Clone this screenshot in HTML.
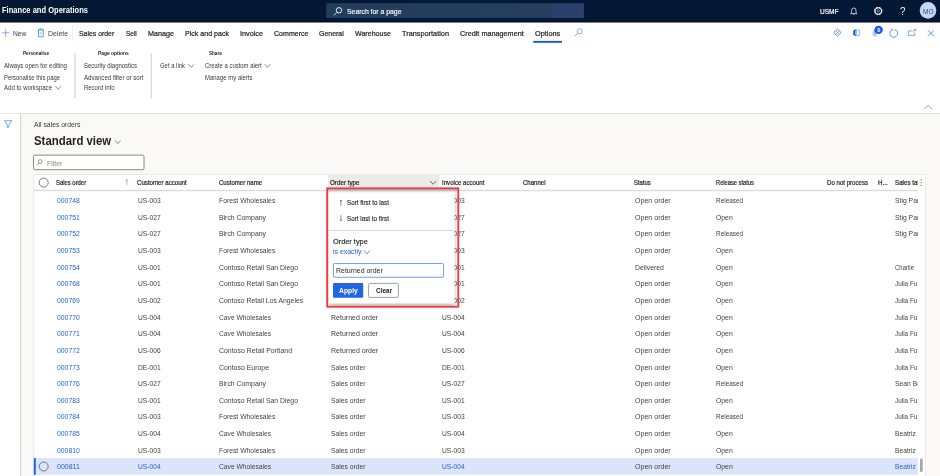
<!DOCTYPE html>
<html><head><meta charset="utf-8"><title>All sales orders</title>
<style>
html,body{margin:0;padding:0;}
body{width:940px;height:476px;overflow:hidden;position:relative;background:#faf9f8;font-family:"Liberation Sans",sans-serif;}
.t{position:absolute;white-space:nowrap;line-height:12px;height:12px;display:block;transform-origin:0 50%;}
.L{position:absolute;left:0;top:0;display:block;}
</style></head><body>
<svg class="L" width="940" height="476" viewBox="0 0 940 476"><defs><linearGradient id="sg" x1="0" x2="1" y1="0" y2="0"><stop offset="0" stop-color="#233e5d"/><stop offset="0.874" stop-color="#243f5e"/><stop offset="0.878" stop-color="#2a3f6a"/><stop offset="1" stop-color="#2a3f6b"/></linearGradient><filter id="sh" x="-15%" y="-15%" width="130%" height="135%"><feGaussianBlur stdDeviation="2.1"/></filter><linearGradient id="tg" x1="0" x2="0" y1="0" y2="1"><stop offset="0" stop-color="#8c9898" stop-opacity="0.75"/><stop offset="1" stop-color="#8c9898" stop-opacity="0"/></linearGradient></defs><rect x="0.00" y="0.00" width="940.00" height="22.60" fill="#041734" />
<rect x="0.00" y="21.60" width="940.00" height="1.00" fill="#01061f" />
<rect x="326.20" y="3.20" width="257.70" height="14.70" fill="url(#sg)" rx="0.8" />
<g transform="translate(333 6.3)"><circle cx="6" cy="4" r="2.7" fill="none" stroke="#fff" stroke-width="0.9"/><path d="M4 6 L1 9" fill="none" stroke="#fff" stroke-width="0.9" /></g>
<g transform="translate(850.3 6.9)"><path d="M1.3 6 V3.3 A2.2 2.2 0 0 1 5.7 3.3 V6 L6.7 6.7 H0.3 L1.3 6 M2.9 7.7 H4.1" fill="none" stroke="#fff" stroke-width="0.7" stroke-linejoin="round"/></g>
<g transform="translate(874 6.8)"><circle cx="4.25" cy="4.2" r="3.5" fill="none" stroke="#fff" stroke-width="1.25" stroke-dasharray="2.1 0.65"/><circle cx="4.25" cy="4.2" r="3.3" fill="none" stroke="#fff" stroke-width="0.7"/><circle cx="4.25" cy="4.2" r="1.2" fill="none" stroke="#fff" stroke-width="0.55" opacity="0.85"/></g>
<circle cx="928" cy="10.4" r="8.3" fill="#c6d5f5"/>
<rect x="0.00" y="22.60" width="940.00" height="91.00" fill="#ffffff" />
<g transform="translate(1.6 28.7)"><path d="M4.1 0 V8.3 M0.2 4.15 H8 " fill="none" stroke="#5d8fe6" stroke-width="0.7" /></g>
<g transform="translate(37.4 28.4)"><path d="M0.3 1.6 H6.7 M2.3 1.6 V0.5 H4.7 V1.6 M1.1 1.6 V8.4 H5.9 V1.6" fill="none" stroke="#3f7be2" stroke-width="0.75" /><path d="M2.8 3.4 V6.8 M4.2 3.4 V6.8" fill="none" stroke="#8fb0ee" stroke-width="0.6" /></g>
<rect x="72.50" y="25.00" width="0.60" height="16.00" fill="#e1dfdd" />
<rect x="533.20" y="40.90" width="28.80" height="1.90" fill="#1459e4" />
<g transform="translate(574.2 27.9)"><circle cx="5.5" cy="3.4" r="2.5" fill="none" stroke="#5a8dea" stroke-width="0.7"/><path d="M3.7 5.2 L0.8 8.1" fill="none" stroke="#5a8dea" stroke-width="0.7" /></g>
<g transform="translate(833.2 28.6)"><path d="M4.25 0.5 L8 4 L4.25 7.6 L0.5 4 Z" fill="none" stroke="#3f7be6" stroke-width="0.8" stroke-linejoin="round"/><path d="M2.6 2.4 L5.9 5.6 M5.9 2.4 L2.6 5.6" fill="none" stroke="#5a8dea" stroke-width="0.7" /></g>
<g transform="translate(853 29)"><path d="M0.2 1.5 L3.4 0.1 V7.3 L0.2 5.9 Z" fill="#1f5fe0"/><rect x="2.1" y="1.7" width="0.6" height="4" fill="#dfe9fb"/><path d="M3.6 0.9 H6.4 V6.5 H3.6" fill="none" stroke="#6f9aec" stroke-width="0.7" /></g>
<g transform="translate(872.6 29.6)"><path d="M1 0.3 H3.4 V5 A1.2 1.2 0 0 1 1 5 Z" fill="#9db8ee"/><path d="M4.2 1.6 V5.3 A2 2 0 0 1 0.3 5.3 V2" fill="none" stroke="#9db8ee" stroke-width="0.6" /></g>
<circle cx="878.6" cy="29.9" r="4.2" fill="#1a58de"/>
<g transform="translate(889 28.3)"><path d="M2.9 1.6 A3.9 3.9 0 1 0 5.9 1.3" fill="none" stroke="#3f7be6" stroke-width="0.8" /><path d="M3.3 0.1 L2.9 1.8 L4.6 2.2" fill="none" stroke="#3f7be6" stroke-width="0.7" /></g>
<g transform="translate(907.9 29)"><path d="M4.6 1.9 H0.4 V6.4 H6.9 V3.6" fill="none" stroke="#5a8dea" stroke-width="0.8" /><path d="M5 2.6 L7.9 0.4 M6.2 0.3 H8 V2" fill="none" stroke="#4f86ea" stroke-width="0.7" /></g>
<g transform="translate(927.7 30.1)"><path d="M0.2 0.2 L6.2 6.2 M6.2 0.2 L0.2 6.2" fill="none" stroke="#3f7be6" stroke-width="0.8" /></g>
<g transform="translate(55.4 86.2)"><path d="M0 0 L2.8 3.2 L5.6 0" fill="none" stroke="#605e5c" stroke-width="0.7" /></g>
<g transform="translate(188.4 64.2)"><path d="M0 0 L2.8 3.2 L5.6 0" fill="none" stroke="#605e5c" stroke-width="0.7" /></g>
<g transform="translate(264.7 64.2)"><path d="M0 0 L2.8 3.2 L5.6 0" fill="none" stroke="#605e5c" stroke-width="0.7" /></g>
<rect x="74.40" y="53.00" width="1.10" height="45.00" fill="#d6d4d2" />
<rect x="150.80" y="53.00" width="1.10" height="45.00" fill="#d6d4d2" />
<g transform="translate(924.5 105.5)"><path d="M0 3.4 L3.7 0 L7.4 3.4" fill="none" stroke="#8a8886" stroke-width="0.8" /></g>
<rect x="0.00" y="113.10" width="940.00" height="0.90" fill="#d8d6d4" />
<rect x="0.00" y="113.80" width="940.00" height="363.00" fill="#faf9f8" />
<rect x="0.00" y="113.80" width="20.20" height="363.00" fill="#ffffff" />
<rect x="20.20" y="113.80" width="0.90" height="363.00" fill="#cfcdcb" />
<g transform="translate(3.9 120.2)"><path d="M0.4 0.5 H8 L5 4.2 V6.9 L3.4 7.4 V4.2 Z" fill="none" stroke="#4f86ea" stroke-width="0.75" stroke-linejoin="round"/></g>
<g transform="translate(115.1 140.4)"><path d="M0 0 L2.75 3.2 L5.5 0" fill="none" stroke="#605e5c" stroke-width="0.7" /></g>
<rect x="33.50" y="155.10" width="110.50" height="14.60" fill="#ffffff" stroke="#6b6967" stroke-width="0.8" rx="1.5" />
<g transform="translate(36.3 159.3)"><circle cx="3.9" cy="2.3" r="1.95" fill="none" stroke="#605e5c" stroke-width="0.65"/><path d="M2.5 3.7 L0.3 5.9" fill="none" stroke="#605e5c" stroke-width="0.65" /></g>
<rect x="33.80" y="174.60" width="891.60" height="303.00" fill="#ffffff" stroke="#e6e4e2" stroke-width="0.8" />
<rect x="328.00" y="174.60" width="111.40" height="12.40" fill="#edebe9" />
<rect x="33.80" y="189.80" width="884.00" height="1.40" fill="#dedcda" />
<circle cx="43.7" cy="182.6" r="4.5" fill="none" stroke="#605e5c" stroke-width="0.8"/>
<g transform="translate(125.4 179.3)"><path d="M1.5 0.3 V5.6 M0.3 1.5 L1.5 0.3 L2.7 1.5" fill="none" stroke="#7a7876" stroke-width="0.55" /></g>
<g transform="translate(430 181)"><path d="M0 0 L3.15 3.3 L6.3 0" fill="none" stroke="#484644" stroke-width="0.8" /></g>
<rect x="920.60" y="179.30" width="1.10" height="1.10" fill="#605e5c" />
<rect x="920.60" y="182.10" width="1.10" height="1.10" fill="#605e5c" />
<rect x="920.60" y="184.90" width="1.10" height="1.10" fill="#605e5c" />
<rect x="33.80" y="458.10" width="884.10" height="16.70" fill="#dae5fb" />
<rect x="33.80" y="458.10" width="2.00" height="16.70" fill="#2266e3" />
<circle cx="43.7" cy="466.5" r="4.5" fill="none" stroke="#605e5c" stroke-width="0.8"/>
<rect x="920.00" y="458.50" width="2.70" height="13.50" fill="#a6a6a6" rx="1.3" /></svg>
<span class="t" style="left:2px;top:5px;font-size:8.2px;color:#ffffff;font-weight:700;transform:scaleX(0.9221);">Finance and Operations</span>
<span class="t" style="left:346.5px;top:6px;font-size:7.6px;color:#ffffff;-webkit-text-stroke:0.15px #ffffff;transform:scaleX(0.9027);">Search for a page</span>
<span class="t" style="left:819.5px;top:6px;font-size:7.2px;color:#ffffff;-webkit-text-stroke:0.2px #ffffff;transform:scaleX(0.9080);">USMF</span>
<span class="t" style="left:900px;top:5px;font-size:11.5px;color:#ffffff;transform:scaleX(0.8500);">?</span>
<span class="t" style="left:922.6px;top:6px;font-size:7px;color:#3d4d6e;transform:scaleX(0.9396);">MO</span>
<span class="t" style="left:12.5px;top:28px;font-size:7.7px;color:#403f3e;transform:scaleX(0.8772);">New</span>
<span class="t" style="left:47.5px;top:28px;font-size:7.7px;color:#403f3e;transform:scaleX(0.8995);">Delete</span>
<span class="t" style="left:78.75px;top:28px;font-size:7.7px;color:#252423;-webkit-text-stroke:0.22px #252423;transform:scaleX(0.8967);">Sales order</span>
<span class="t" style="left:125.5px;top:28px;font-size:7.7px;color:#252423;-webkit-text-stroke:0.22px #252423;transform:scaleX(0.8380);">Sell</span>
<span class="t" style="left:147.5px;top:28px;font-size:7.7px;color:#252423;-webkit-text-stroke:0.22px #252423;transform:scaleX(0.9359);">Manage</span>
<span class="t" style="left:184.5px;top:28px;font-size:7.7px;color:#252423;-webkit-text-stroke:0.22px #252423;transform:scaleX(0.9194);">Pick and pack</span>
<span class="t" style="left:239.5px;top:28px;font-size:7.7px;color:#252423;-webkit-text-stroke:0.22px #252423;transform:scaleX(0.9442);">Invoice</span>
<span class="t" style="left:273.5px;top:28px;font-size:7.7px;color:#252423;-webkit-text-stroke:0.22px #252423;transform:scaleX(0.9177);">Commerce</span>
<span class="t" style="left:319.25px;top:28px;font-size:7.7px;color:#252423;-webkit-text-stroke:0.22px #252423;transform:scaleX(0.9046);">General</span>
<span class="t" style="left:355px;top:28px;font-size:7.7px;color:#252423;-webkit-text-stroke:0.22px #252423;transform:scaleX(0.9223);">Warehouse</span>
<span class="t" style="left:402px;top:28px;font-size:7.7px;color:#252423;-webkit-text-stroke:0.22px #252423;transform:scaleX(0.9534);">Transportation</span>
<span class="t" style="left:460px;top:28px;font-size:7.7px;color:#252423;-webkit-text-stroke:0.22px #252423;transform:scaleX(0.9442);">Credit management</span>
<span class="t" style="left:535px;top:28px;font-size:7.7px;color:#252423;-webkit-text-stroke:0.22px #252423;transform:scaleX(0.9528);">Options</span>
<span class="t" style="left:877.2px;top:24px;font-size:5px;color:#ffffff;font-weight:700;transform:scaleX(1.0000);">0</span>
<span class="t" style="left:23px;top:47px;font-size:5.5px;color:#252423;font-weight:700;transform:scaleX(0.8417);">Personalise</span>
<span class="t" style="left:98.25px;top:47px;font-size:5.5px;color:#252423;font-weight:700;transform:scaleX(0.8905);">Page options</span>
<span class="t" style="left:208.75px;top:47px;font-size:5.5px;color:#252423;font-weight:700;transform:scaleX(0.8335);">Share</span>
<span class="t" style="left:4px;top:60px;font-size:6.5px;color:#3b3a39;transform:scaleX(0.9372);">Always open for editing</span>
<span class="t" style="left:4px;top:72px;font-size:6.5px;color:#3b3a39;transform:scaleX(0.9010);">Personalise this page</span>
<span class="t" style="left:4px;top:82px;font-size:6.5px;color:#3b3a39;transform:scaleX(0.9289);">Add to workspace</span>
<span class="t" style="left:84px;top:60px;font-size:6.5px;color:#3b3a39;transform:scaleX(0.9168);">Security diagnostics</span>
<span class="t" style="left:84px;top:72px;font-size:6.5px;color:#3b3a39;transform:scaleX(0.9409);">Advanced filter or sort</span>
<span class="t" style="left:84px;top:82px;font-size:6.5px;color:#3b3a39;transform:scaleX(0.9173);">Record info</span>
<span class="t" style="left:160px;top:60px;font-size:6.5px;color:#3b3a39;transform:scaleX(0.9101);">Get a link</span>
<span class="t" style="left:205px;top:60px;font-size:6.5px;color:#3b3a39;transform:scaleX(0.9133);">Create a custom alert</span>
<span class="t" style="left:205px;top:72px;font-size:6.5px;color:#3b3a39;transform:scaleX(0.9193);">Manage my alerts</span>
<span class="t" style="left:34.1px;top:119px;font-size:6.6px;color:#3b3a39;transform:scaleX(1.0315);">All sales orders</span>
<span class="t" style="left:34.4px;top:135px;font-size:12px;color:#201f1e;font-weight:700;transform:scaleX(0.9489);">Standard view</span>
<span class="t" style="left:46.6px;top:158px;font-size:7px;color:#8a8886;transform:scaleX(0.9896);">Filter</span>
<span class="t" style="left:56px;top:177px;font-size:6.5px;color:#252423;-webkit-text-stroke:0.2px #252423;transform:scaleX(0.9053);">Sales order</span>
<span class="t" style="left:137.4px;top:177px;font-size:6.5px;color:#252423;-webkit-text-stroke:0.2px #252423;transform:scaleX(0.9422);">Customer account</span>
<span class="t" style="left:218.9px;top:177px;font-size:6.5px;color:#252423;-webkit-text-stroke:0.2px #252423;transform:scaleX(0.9319);">Customer name</span>
<span class="t" style="left:330px;top:177px;font-size:6.5px;color:#252423;-webkit-text-stroke:0.2px #252423;transform:scaleX(0.9603);">Order type</span>
<span class="t" style="left:441.8px;top:177px;font-size:6.5px;color:#252423;-webkit-text-stroke:0.2px #252423;transform:scaleX(0.9386);">Invoice account</span>
<span class="t" style="left:522.5px;top:177px;font-size:6.5px;color:#252423;-webkit-text-stroke:0.2px #252423;transform:scaleX(0.9290);">Channel</span>
<span class="t" style="left:634.2px;top:177px;font-size:6.5px;color:#252423;-webkit-text-stroke:0.2px #252423;transform:scaleX(0.9058);">Status</span>
<span class="t" style="left:715.9px;top:177px;font-size:6.5px;color:#252423;-webkit-text-stroke:0.2px #252423;transform:scaleX(0.8791);">Release status</span>
<span class="t" style="left:827px;top:177px;font-size:6.5px;color:#252423;-webkit-text-stroke:0.2px #252423;transform:scaleX(0.9378);">Do not process</span>
<span class="t" style="left:877.5px;top:177px;font-size:6.5px;color:#252423;-webkit-text-stroke:0.2px #252423;transform:scaleX(0.9580);">H...</span>
<span class="t" style="left:894.5px;top:177px;font-size:6.5px;color:#252423;-webkit-text-stroke:0.2px #252423;transform:scaleX(0.9584);width:23.58px;overflow:hidden;">Sales tal</span>
<span class="t" style="left:56.6px;top:195px;font-size:7.7px;color:#2463dc;transform:scaleX(0.8887);">000748</span>
<span class="t" style="left:137.9px;top:195px;font-size:7.7px;color:#403f3e;transform:scaleX(0.8666);">US-003</span>
<span class="t" style="left:219px;top:195px;font-size:7.7px;color:#403f3e;transform:scaleX(0.8842);">Forest Wholesales</span>
<span class="t" style="left:442.2px;top:195px;font-size:7.7px;color:#403f3e;transform:scaleX(0.8666);">US-003</span>
<span class="t" style="left:635px;top:195px;font-size:7.7px;color:#403f3e;transform:scaleX(0.9180);">Open order</span>
<span class="t" style="left:716px;top:195px;font-size:7.7px;color:#403f3e;transform:scaleX(0.8373);">Released</span>
<span class="t" style="left:895.2px;top:195px;font-size:7.7px;color:#403f3e;transform:scaleX(0.8845);width:25.66px;overflow:hidden;">Stig Par</span>
<span class="t" style="left:56.6px;top:212px;font-size:7.7px;color:#2463dc;transform:scaleX(0.8887);">000751</span>
<span class="t" style="left:137.9px;top:212px;font-size:7.7px;color:#403f3e;transform:scaleX(0.8666);">US-027</span>
<span class="t" style="left:219px;top:212px;font-size:7.7px;color:#403f3e;transform:scaleX(0.8942);">Birch Company</span>
<span class="t" style="left:442.2px;top:212px;font-size:7.7px;color:#403f3e;transform:scaleX(0.8666);">US-027</span>
<span class="t" style="left:635px;top:212px;font-size:7.7px;color:#403f3e;transform:scaleX(0.9180);">Open order</span>
<span class="t" style="left:716px;top:212px;font-size:7.7px;color:#403f3e;transform:scaleX(0.8877);">Open</span>
<span class="t" style="left:895.2px;top:212px;font-size:7.7px;color:#403f3e;transform:scaleX(0.8845);width:25.66px;overflow:hidden;">Stig Par</span>
<span class="t" style="left:56.6px;top:228px;font-size:7.7px;color:#2463dc;transform:scaleX(0.8887);">000752</span>
<span class="t" style="left:137.9px;top:228px;font-size:7.7px;color:#403f3e;transform:scaleX(0.8666);">US-027</span>
<span class="t" style="left:219px;top:228px;font-size:7.7px;color:#403f3e;transform:scaleX(0.8942);">Birch Company</span>
<span class="t" style="left:442.2px;top:228px;font-size:7.7px;color:#403f3e;transform:scaleX(0.8666);">US-027</span>
<span class="t" style="left:635px;top:228px;font-size:7.7px;color:#403f3e;transform:scaleX(0.9180);">Open order</span>
<span class="t" style="left:716px;top:228px;font-size:7.7px;color:#403f3e;transform:scaleX(0.8373);">Released</span>
<span class="t" style="left:895.2px;top:228px;font-size:7.7px;color:#403f3e;transform:scaleX(0.8845);width:25.66px;overflow:hidden;">Stig Par</span>
<span class="t" style="left:56.6px;top:245px;font-size:7.7px;color:#2463dc;transform:scaleX(0.8887);">000753</span>
<span class="t" style="left:137.9px;top:245px;font-size:7.7px;color:#403f3e;transform:scaleX(0.8666);">US-003</span>
<span class="t" style="left:219px;top:245px;font-size:7.7px;color:#403f3e;transform:scaleX(0.8842);">Forest Wholesales</span>
<span class="t" style="left:442.2px;top:245px;font-size:7.7px;color:#403f3e;transform:scaleX(0.8666);">US-003</span>
<span class="t" style="left:635px;top:245px;font-size:7.7px;color:#403f3e;transform:scaleX(0.9180);">Open order</span>
<span class="t" style="left:716px;top:245px;font-size:7.7px;color:#403f3e;transform:scaleX(0.8877);">Open</span>
<span class="t" style="left:56.6px;top:262px;font-size:7.7px;color:#2463dc;transform:scaleX(0.8887);">000754</span>
<span class="t" style="left:137.9px;top:262px;font-size:7.7px;color:#403f3e;transform:scaleX(0.8666);">US-001</span>
<span class="t" style="left:219px;top:262px;font-size:7.7px;color:#403f3e;transform:scaleX(0.8930);">Contoso Retail San Diego</span>
<span class="t" style="left:442.2px;top:262px;font-size:7.7px;color:#403f3e;transform:scaleX(0.8666);">US-001</span>
<span class="t" style="left:635px;top:262px;font-size:7.7px;color:#403f3e;transform:scaleX(0.8897);">Delivered</span>
<span class="t" style="left:716px;top:262px;font-size:7.7px;color:#403f3e;transform:scaleX(0.8877);">Open</span>
<span class="t" style="left:895.2px;top:262px;font-size:7.7px;color:#403f3e;transform:scaleX(0.7800);width:29.10px;overflow:hidden;">Charlie</span>
<span class="t" style="left:56.6px;top:278px;font-size:7.7px;color:#2463dc;transform:scaleX(0.8887);">000768</span>
<span class="t" style="left:137.9px;top:278px;font-size:7.7px;color:#403f3e;transform:scaleX(0.8666);">US-001</span>
<span class="t" style="left:219px;top:278px;font-size:7.7px;color:#403f3e;transform:scaleX(0.8930);">Contoso Retail San Diego</span>
<span class="t" style="left:442.2px;top:278px;font-size:7.7px;color:#403f3e;transform:scaleX(0.8666);">US-001</span>
<span class="t" style="left:635px;top:278px;font-size:7.7px;color:#403f3e;transform:scaleX(0.9180);">Open order</span>
<span class="t" style="left:716px;top:278px;font-size:7.7px;color:#403f3e;transform:scaleX(0.8877);">Open</span>
<span class="t" style="left:895.2px;top:278px;font-size:7.7px;color:#403f3e;transform:scaleX(0.8320);width:27.28px;overflow:hidden;">Julia Fu</span>
<span class="t" style="left:56.6px;top:295px;font-size:7.7px;color:#2463dc;transform:scaleX(0.8887);">000769</span>
<span class="t" style="left:137.9px;top:295px;font-size:7.7px;color:#403f3e;transform:scaleX(0.8666);">US-002</span>
<span class="t" style="left:219px;top:295px;font-size:7.7px;color:#403f3e;transform:scaleX(0.8914);">Contoso Retail Los Angeles</span>
<span class="t" style="left:442.2px;top:295px;font-size:7.7px;color:#403f3e;transform:scaleX(0.8666);">US-002</span>
<span class="t" style="left:635px;top:295px;font-size:7.7px;color:#403f3e;transform:scaleX(0.9180);">Open order</span>
<span class="t" style="left:716px;top:295px;font-size:7.7px;color:#403f3e;transform:scaleX(0.8877);">Open</span>
<span class="t" style="left:895.2px;top:295px;font-size:7.7px;color:#403f3e;transform:scaleX(0.8320);width:27.28px;overflow:hidden;">Julia Fu</span>
<span class="t" style="left:56.6px;top:312px;font-size:7.7px;color:#2463dc;transform:scaleX(0.8887);">000770</span>
<span class="t" style="left:137.9px;top:312px;font-size:7.7px;color:#403f3e;transform:scaleX(0.8666);">US-004</span>
<span class="t" style="left:219px;top:312px;font-size:7.7px;color:#403f3e;transform:scaleX(0.8692);">Cave Wholesales</span>
<span class="t" style="left:330.6px;top:312px;font-size:7.7px;color:#403f3e;transform:scaleX(0.9126);">Returned order</span>
<span class="t" style="left:442.2px;top:312px;font-size:7.7px;color:#403f3e;transform:scaleX(0.8666);">US-004</span>
<span class="t" style="left:635px;top:312px;font-size:7.7px;color:#403f3e;transform:scaleX(0.9180);">Open order</span>
<span class="t" style="left:716px;top:312px;font-size:7.7px;color:#403f3e;transform:scaleX(0.8877);">Open</span>
<span class="t" style="left:895.2px;top:312px;font-size:7.7px;color:#403f3e;transform:scaleX(0.8320);width:27.28px;overflow:hidden;">Julia Fu</span>
<span class="t" style="left:56.6px;top:328px;font-size:7.7px;color:#2463dc;transform:scaleX(0.8887);">000771</span>
<span class="t" style="left:137.9px;top:328px;font-size:7.7px;color:#403f3e;transform:scaleX(0.8666);">US-004</span>
<span class="t" style="left:219px;top:328px;font-size:7.7px;color:#403f3e;transform:scaleX(0.8692);">Cave Wholesales</span>
<span class="t" style="left:330.6px;top:328px;font-size:7.7px;color:#403f3e;transform:scaleX(0.9126);">Returned order</span>
<span class="t" style="left:442.2px;top:328px;font-size:7.7px;color:#403f3e;transform:scaleX(0.8666);">US-004</span>
<span class="t" style="left:635px;top:328px;font-size:7.7px;color:#403f3e;transform:scaleX(0.9180);">Open order</span>
<span class="t" style="left:716px;top:328px;font-size:7.7px;color:#403f3e;transform:scaleX(0.8877);">Open</span>
<span class="t" style="left:895.2px;top:328px;font-size:7.7px;color:#403f3e;transform:scaleX(0.8320);width:27.28px;overflow:hidden;">Julia Fu</span>
<span class="t" style="left:56.6px;top:345px;font-size:7.7px;color:#2463dc;transform:scaleX(0.8887);">000772</span>
<span class="t" style="left:137.9px;top:345px;font-size:7.7px;color:#403f3e;transform:scaleX(0.8666);">US-006</span>
<span class="t" style="left:219px;top:345px;font-size:7.7px;color:#403f3e;transform:scaleX(0.8990);">Contoso Retail Portland</span>
<span class="t" style="left:330.6px;top:345px;font-size:7.7px;color:#403f3e;transform:scaleX(0.9126);">Returned order</span>
<span class="t" style="left:442.2px;top:345px;font-size:7.7px;color:#403f3e;transform:scaleX(0.8666);">US-006</span>
<span class="t" style="left:635px;top:345px;font-size:7.7px;color:#403f3e;transform:scaleX(0.9180);">Open order</span>
<span class="t" style="left:716px;top:345px;font-size:7.7px;color:#403f3e;transform:scaleX(0.8877);">Open</span>
<span class="t" style="left:895.2px;top:345px;font-size:7.7px;color:#403f3e;transform:scaleX(0.8320);width:27.28px;overflow:hidden;">Julia Fu</span>
<span class="t" style="left:56.6px;top:362px;font-size:7.7px;color:#2463dc;transform:scaleX(0.8887);">000773</span>
<span class="t" style="left:137.9px;top:362px;font-size:7.7px;color:#403f3e;transform:scaleX(0.8666);">DE-001</span>
<span class="t" style="left:219px;top:362px;font-size:7.7px;color:#403f3e;transform:scaleX(0.8999);">Contoso Europe</span>
<span class="t" style="left:330.6px;top:362px;font-size:7.7px;color:#403f3e;transform:scaleX(0.8776);">Sales order</span>
<span class="t" style="left:442.2px;top:362px;font-size:7.7px;color:#403f3e;transform:scaleX(0.8666);">DE-001</span>
<span class="t" style="left:635px;top:362px;font-size:7.7px;color:#403f3e;transform:scaleX(0.9180);">Open order</span>
<span class="t" style="left:716px;top:362px;font-size:7.7px;color:#403f3e;transform:scaleX(0.8877);">Open</span>
<span class="t" style="left:895.2px;top:362px;font-size:7.7px;color:#403f3e;transform:scaleX(0.8320);width:27.28px;overflow:hidden;">Julia Fu</span>
<span class="t" style="left:56.6px;top:378px;font-size:7.7px;color:#2463dc;transform:scaleX(0.8887);">000776</span>
<span class="t" style="left:137.9px;top:378px;font-size:7.7px;color:#403f3e;transform:scaleX(0.8666);">US-027</span>
<span class="t" style="left:219px;top:378px;font-size:7.7px;color:#403f3e;transform:scaleX(0.8942);">Birch Company</span>
<span class="t" style="left:330.6px;top:378px;font-size:7.7px;color:#403f3e;transform:scaleX(0.8776);">Sales order</span>
<span class="t" style="left:442.2px;top:378px;font-size:7.7px;color:#403f3e;transform:scaleX(0.8666);">US-027</span>
<span class="t" style="left:635px;top:378px;font-size:7.7px;color:#403f3e;transform:scaleX(0.9180);">Open order</span>
<span class="t" style="left:716px;top:378px;font-size:7.7px;color:#403f3e;transform:scaleX(0.8373);">Released</span>
<span class="t" style="left:895.2px;top:378px;font-size:7.7px;color:#403f3e;transform:scaleX(0.8814);width:25.76px;overflow:hidden;">Sean Be</span>
<span class="t" style="left:56.6px;top:395px;font-size:7.7px;color:#2463dc;transform:scaleX(0.8887);">000783</span>
<span class="t" style="left:137.9px;top:395px;font-size:7.7px;color:#403f3e;transform:scaleX(0.8666);">US-001</span>
<span class="t" style="left:219px;top:395px;font-size:7.7px;color:#403f3e;transform:scaleX(0.8930);">Contoso Retail San Diego</span>
<span class="t" style="left:330.6px;top:395px;font-size:7.7px;color:#403f3e;transform:scaleX(0.8776);">Sales order</span>
<span class="t" style="left:442.2px;top:395px;font-size:7.7px;color:#403f3e;transform:scaleX(0.8666);">US-001</span>
<span class="t" style="left:635px;top:395px;font-size:7.7px;color:#403f3e;transform:scaleX(0.9180);">Open order</span>
<span class="t" style="left:716px;top:395px;font-size:7.7px;color:#403f3e;transform:scaleX(0.8877);">Open</span>
<span class="t" style="left:895.2px;top:395px;font-size:7.7px;color:#403f3e;transform:scaleX(0.8320);width:27.28px;overflow:hidden;">Julia Fu</span>
<span class="t" style="left:56.6px;top:411px;font-size:7.7px;color:#2463dc;transform:scaleX(0.8887);">000784</span>
<span class="t" style="left:137.9px;top:411px;font-size:7.7px;color:#403f3e;transform:scaleX(0.8666);">US-003</span>
<span class="t" style="left:219px;top:411px;font-size:7.7px;color:#403f3e;transform:scaleX(0.8842);">Forest Wholesales</span>
<span class="t" style="left:330.6px;top:411px;font-size:7.7px;color:#403f3e;transform:scaleX(0.8776);">Sales order</span>
<span class="t" style="left:442.2px;top:411px;font-size:7.7px;color:#403f3e;transform:scaleX(0.8666);">US-003</span>
<span class="t" style="left:635px;top:411px;font-size:7.7px;color:#403f3e;transform:scaleX(0.9180);">Open order</span>
<span class="t" style="left:716px;top:411px;font-size:7.7px;color:#403f3e;transform:scaleX(0.8373);">Released</span>
<span class="t" style="left:895.2px;top:411px;font-size:7.7px;color:#403f3e;transform:scaleX(0.8320);width:27.28px;overflow:hidden;">Julia Fu</span>
<span class="t" style="left:56.6px;top:428px;font-size:7.7px;color:#2463dc;transform:scaleX(0.8887);">000785</span>
<span class="t" style="left:137.9px;top:428px;font-size:7.7px;color:#403f3e;transform:scaleX(0.8666);">US-004</span>
<span class="t" style="left:219px;top:428px;font-size:7.7px;color:#403f3e;transform:scaleX(0.8692);">Cave Wholesales</span>
<span class="t" style="left:330.6px;top:428px;font-size:7.7px;color:#403f3e;transform:scaleX(0.8776);">Sales order</span>
<span class="t" style="left:442.2px;top:428px;font-size:7.7px;color:#403f3e;transform:scaleX(0.8666);">US-004</span>
<span class="t" style="left:635px;top:428px;font-size:7.7px;color:#403f3e;transform:scaleX(0.9180);">Open order</span>
<span class="t" style="left:716px;top:428px;font-size:7.7px;color:#403f3e;transform:scaleX(0.8877);">Open</span>
<span class="t" style="left:895.2px;top:428px;font-size:7.7px;color:#403f3e;transform:scaleX(0.8689);width:26.12px;overflow:hidden;">Beatriz</span>
<span class="t" style="left:56.6px;top:445px;font-size:7.7px;color:#2463dc;transform:scaleX(0.8887);">000810</span>
<span class="t" style="left:137.9px;top:445px;font-size:7.7px;color:#403f3e;transform:scaleX(0.8666);">US-003</span>
<span class="t" style="left:219px;top:445px;font-size:7.7px;color:#403f3e;transform:scaleX(0.8842);">Forest Wholesales</span>
<span class="t" style="left:330.6px;top:445px;font-size:7.7px;color:#403f3e;transform:scaleX(0.8776);">Sales order</span>
<span class="t" style="left:442.2px;top:445px;font-size:7.7px;color:#403f3e;transform:scaleX(0.8666);">US-003</span>
<span class="t" style="left:635px;top:445px;font-size:7.7px;color:#403f3e;transform:scaleX(0.9180);">Open order</span>
<span class="t" style="left:716px;top:445px;font-size:7.7px;color:#403f3e;transform:scaleX(0.8877);">Open</span>
<span class="t" style="left:895.2px;top:445px;font-size:7.7px;color:#403f3e;transform:scaleX(0.8689);width:26.12px;overflow:hidden;">Beatriz</span>
<span class="t" style="left:56.6px;top:461px;font-size:7.7px;color:#2c5fc8;transform:scaleX(0.9086);">000811</span>
<span class="t" style="left:137.9px;top:461px;font-size:7.7px;color:#2c5fc8;transform:scaleX(0.8666);">US-004</span>
<span class="t" style="left:219px;top:461px;font-size:7.7px;color:#403f3e;transform:scaleX(0.8692);">Cave Wholesales</span>
<span class="t" style="left:330.6px;top:461px;font-size:7.7px;color:#403f3e;transform:scaleX(0.8776);">Sales order</span>
<span class="t" style="left:442.2px;top:461px;font-size:7.7px;color:#2c5fc8;transform:scaleX(0.8666);">US-004</span>
<span class="t" style="left:635px;top:461px;font-size:7.7px;color:#403f3e;transform:scaleX(0.9180);">Open order</span>
<span class="t" style="left:716px;top:461px;font-size:7.7px;color:#403f3e;transform:scaleX(0.8877);">Open</span>
<span class="t" style="left:895.2px;top:461px;font-size:7.7px;color:#2c5fc8;transform:scaleX(0.8689);width:26.12px;overflow:hidden;">Beatriz</span>
<svg class="L" width="940" height="476" viewBox="0 0 940 476"><rect x="328.60" y="191.90" width="126.00" height="113.60" fill="#1c3030" opacity="0.36" filter="url(#sh)"/>
<rect x="328.60" y="190.40" width="126.00" height="113.20" fill="#ffffff" />
<rect x="328.00" y="189.10" width="129.50" height="3.80" fill="url(#tg)" />
<rect x="328.60" y="230.00" width="126.00" height="0.70" fill="#c8c6c4" />
<g transform="translate(339.4 199.8)"><path d="M1.5 0.3 V5.8 M0.4 1.4 L1.5 0.3 L2.6 1.4" fill="none" stroke="#3b3a39" stroke-width="0.6" /></g>
<g transform="translate(339.4 215)"><path d="M1.5 0.3 V5.8 M0.4 4.7 L1.5 5.8 L2.6 4.7" fill="none" stroke="#3b3a39" stroke-width="0.6" /></g>
<g transform="translate(364.1 250.5)"><path d="M0 0 L2.9 3.3 L5.8 0" fill="none" stroke="#2a69de" stroke-width="0.75" /></g>
<rect x="333.43" y="263.53" width="110.15" height="13.75" fill="#ffffff" stroke="#5a8dea" stroke-width="0.85" rx="1" />
<rect x="333.00" y="283.00" width="30.20" height="14.80" fill="#2266e3" rx="1" />
<rect x="368.60" y="283.40" width="29.80" height="14.00" fill="#ffffff" stroke="#8a8886" stroke-width="0.8" rx="1" />
<rect x="327.20" y="188.30" width="131.10" height="118.40" fill="none" stroke="#f6343b" stroke-width="1.8" /></svg>
<span class="t" style="left:347px;top:197px;font-size:6.5px;color:#252423;-webkit-text-stroke:0.12px #252423;transform:scaleX(0.9686);">Sort first to last</span>
<span class="t" style="left:347px;top:213px;font-size:6.5px;color:#252423;-webkit-text-stroke:0.12px #252423;transform:scaleX(0.9686);">Sort last to first</span>
<span class="t" style="left:333px;top:236px;font-size:7.7px;color:#252423;-webkit-text-stroke:0.15px #252423;transform:scaleX(0.9579);">Order type</span>
<span class="t" style="left:333px;top:246px;font-size:7.2px;color:#2463dc;transform:scaleX(0.9641);">is exactly</span>
<span class="t" style="left:336.3px;top:265px;font-size:7.2px;color:#252423;transform:scaleX(0.9660);">Returned order</span>
<span class="t" style="left:339px;top:285px;font-size:7.2px;color:#ffffff;font-weight:700;transform:scaleX(0.9415);">Apply</span>
<span class="t" style="left:375.6px;top:285px;font-size:7.2px;color:#252423;font-weight:700;transform:scaleX(0.9008);">Clear</span>
</body></html>
